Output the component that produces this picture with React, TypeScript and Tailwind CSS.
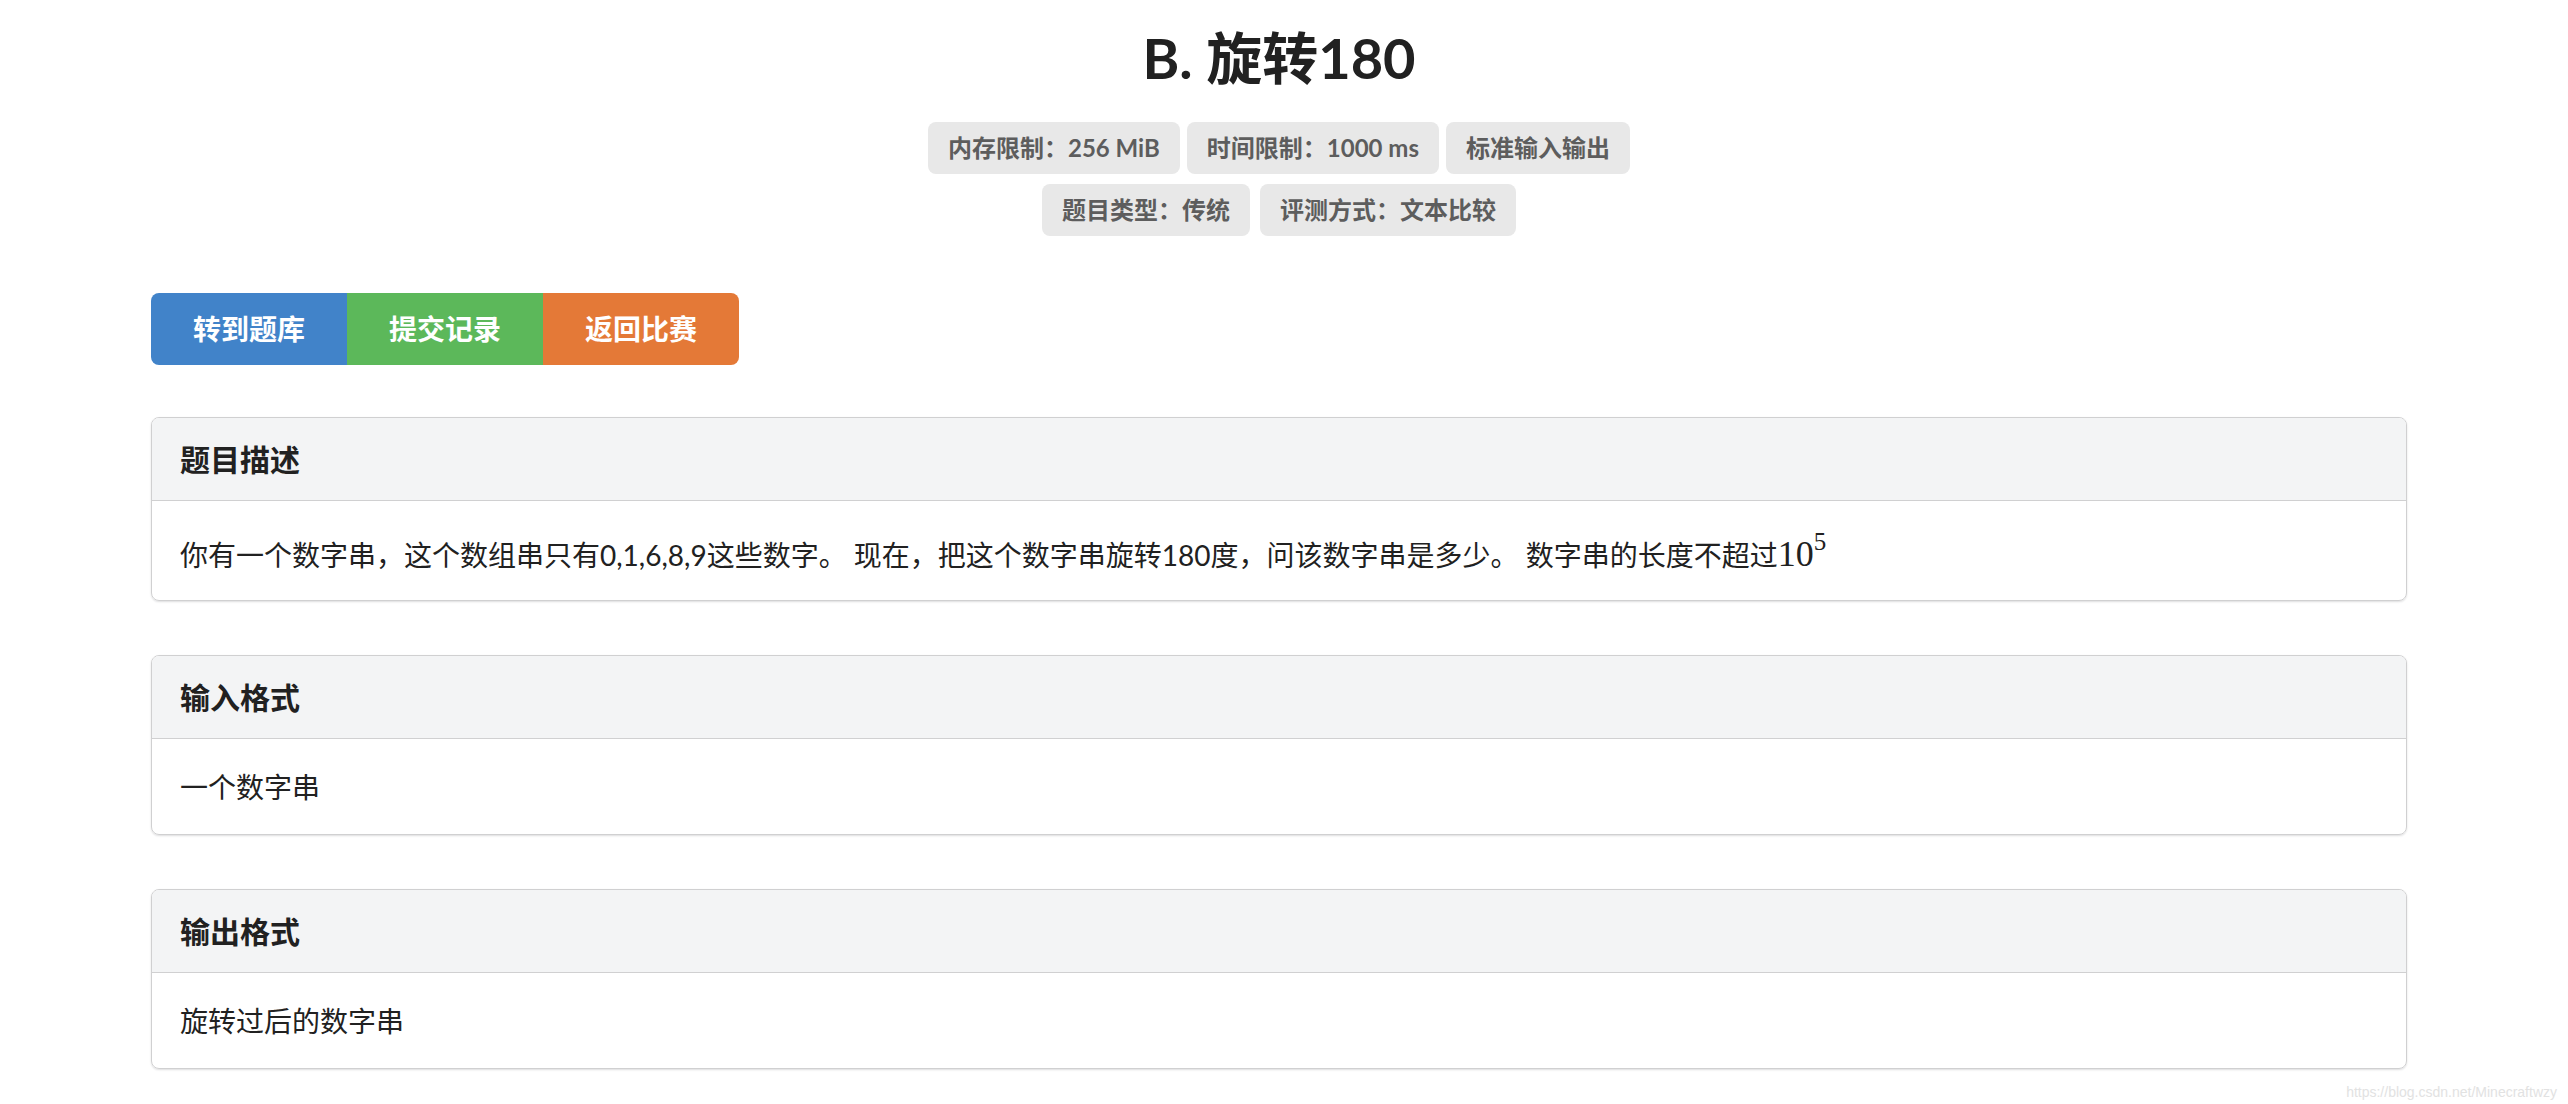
import React from "react";

const tagsTop = ["内存限制：256 MiB", "时间限制：1000 ms", "标准输入输出"];
const tagsBottom = ["题目类型：传统", "评测方式：文本比较"];

const Tag = ({ text }: { text: string }) => (
  <div className="flex h-[52px] items-center rounded-[8px] bg-[#e8e8e8] px-[20px] text-[24px] font-bold leading-none text-[#5d5d5d]">
    {text}
  </div>
);

interface SectionProps {
  title: string;
  children: React.ReactNode;
  tall?: boolean;
}

const Section = ({ title, children, tall }: SectionProps) => (
  <div className="overflow-hidden rounded-[8px] border border-[#d0d0d1] shadow-[0_1px_2px_0_rgba(34,36,38,0.15)]">
    <div className="flex h-[83px] items-center border-b border-[#d0d0d1] bg-[#f3f4f5] px-[28px] text-[30px] font-bold text-[#212121]">
      {title}
    </div>
    <div
      className={
        tall
          ? "flex h-[99px] items-center px-[28px] text-[28px] text-[#212121]"
          : "flex h-[95px] items-center px-[28px] text-[28px] text-[#212121]"
      }
    >
      {children}
    </div>
  </div>
);

export default function App() {
  return (
    <div
      className="relative h-[1104px] overflow-hidden bg-white"
      style={{ fontFamily: 'Lato, "Noto Sans CJK SC", sans-serif' }}
    >
      <div className="pl-[151px] pr-[161px]">
        <div className="flex flex-col items-center pt-[22px]">
          <h1 className="text-[56px] font-bold leading-[72px] text-[#212121]">B. 旋转180</h1>
          <div className="mt-[28px] flex gap-[7px]">
            {tagsTop.map((t) => (
              <Tag key={t} text={t} />
            ))}
          </div>
          <div className="mt-[10px] flex gap-[10px]">
            {tagsBottom.map((t) => (
              <Tag key={t} text={t} />
            ))}
          </div>
        </div>

        <div className="mt-[57px] flex">
          <button className="flex h-[72px] w-[196px] items-center justify-center rounded-l-[8px] bg-[#4183c9] text-[28px] font-bold text-white">
            转到题库
          </button>
          <button className="flex h-[72px] w-[196px] items-center justify-center bg-[#5cb85a] text-[28px] font-bold text-white">
            提交记录
          </button>
          <button className="flex h-[72px] w-[196px] items-center justify-center rounded-r-[8px] bg-[#e47937] text-[28px] font-bold text-white">
            返回比赛
          </button>
        </div>

        <div className="mt-[52px] flex flex-col gap-[54px]">
          <Section title="题目描述" tall>
            <p className="flex items-baseline pt-[8px]">
              <span>
                你有一个数字串，这个数组串只有0,1,6,8,9这些数字。 现在，把这个数字串旋转180度，问该数字串是多少。 数字串的长度不超过
              </span>
              <span className="font-['Liberation_Serif',serif] text-[36px] leading-none">
                10
                <sup className="relative -top-[16px] align-baseline text-[25px]">5</sup>
              </span>
            </p>
          </Section>
          <Section title="输入格式">一个数字串</Section>
          <Section title="输出格式">旋转过后的数字串</Section>
        </div>
      </div>

      <div className="absolute right-[11px] top-[1084px] font-['Liberation_Sans',sans-serif] text-[14px] leading-[16px] text-[#e2e2e2]">
        https://blog.csdn.net/Minecraftwzy
      </div>
    </div>
  );
}
